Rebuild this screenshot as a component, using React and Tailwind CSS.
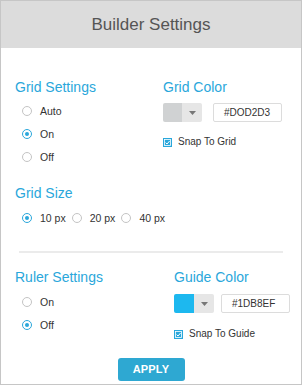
import React from "react";

const font = { fontFamily: '"Liberation Sans", Arial, sans-serif' };

function Radio({ checked, label, className = "" }) {
  return (
    <div className={"flex items-center h-[23px] whitespace-nowrap " + className}>
      {checked ? (
        <span className="w-[10px] h-[10px] shrink-0 rounded-full border border-[#2aa7db] flex items-center justify-center bg-white">
          <span className="w-[4px] h-[4px] rounded-full bg-[#2aa7db]" />
        </span>
      ) : (
        <span className="w-[10px] h-[10px] shrink-0 rounded-full border border-[#c4c4c4] bg-white" />
      )}
      <span className="ml-[8px] text-[10.5px] leading-[14px] text-[#333]">{label}</span>
    </div>
  );
}

function Check({ label, className = "" }) {
  return (
    <div className={"flex items-center h-[12px] whitespace-nowrap " + className}>
      <svg width="9" height="9" viewBox="0 0 9 9">
        <rect x="0" y="0" width="9" height="9" fill="#2aa7db" />
        <rect x="1.5" y="1.5" width="6" height="6" fill="none" stroke="#fff" strokeWidth="0.8" />
        <path d="M2.6 4.6 L4 6 L6.6 3" fill="none" stroke="#fff" strokeWidth="1" />
      </svg>
      <span className="ml-[6px] text-[10px] leading-[14px] text-[#333]">{label}</span>
    </div>
  );
}

function ColorPicker({ color, value, swatchW, inputW, gap, className = "" }) {
  return (
    <div className={"flex items-center " + className}>
      <div className="flex h-[19px] rounded-[2px] overflow-hidden">
        <div className="h-full" style={{ width: swatchW, background: color }} />
        <div className="w-[20px] h-full bg-[#e6e6e6] flex items-center justify-center">
          <svg width="7" height="4" viewBox="0 0 7 4">
            <path d="M0 0 L7 0 L3.5 4 Z" fill="#777" />
          </svg>
        </div>
      </div>
      <div
        className="h-[19px] border border-[#dcdcdc] rounded-[2px] bg-white flex items-center pl-[10px] text-[10px] text-[#333]"
        style={{ width: inputW, marginLeft: gap }}
      >
        {value}
      </div>
    </div>
  );
}

function Title({ children, className = "" }) {
  return (
    <div className={"text-[14px] leading-[18px] text-[#2aa7db] whitespace-nowrap " + className}>{children}</div>
  );
}

export default function App() {
  return (
    <div style={font} className="w-[302px] h-[385px] border border-[#c6c6c6] bg-white flex flex-col box-border">
      <div className="h-[47px] bg-[#dcdcdc] flex items-center justify-center text-[17px] text-[#555] shrink-0">
        Builder Settings
      </div>
      <div className="flex pt-[30px]">
        <div className="w-[162px] pl-[14px]">
          <Title>Grid Settings</Title>
          <div className="mt-[3px] pl-[7px]">
            <Radio label="Auto" />
            <Radio label="On" checked />
            <Radio label="Off" />
          </div>
          <Title className="mt-[16px]">Grid Size</Title>
          <div className="mt-[4px] pl-[7px] flex">
            <Radio label="10 px" checked />
            <Radio label="20 px" className="ml-[6px]" />
            <Radio label="40 px" className="ml-[6px]" />
          </div>
        </div>
        <div>
          <Title>Grid Color</Title>
          <ColorPicker color="#d0d2d3" value="#DOD2D3" swatchW={19} inputW={69} gap={11} className="mt-[7px]" />
          <Check label="Snap To Grid" className="mt-[14px]" />
        </div>
      </div>
      <div className="mx-[18px] mt-[22px] h-[2px] bg-[#ebebeb]" />
      <div className="flex pt-[15px]">
        <div className="w-[173px] pl-[14px]">
          <Title>Ruler Settings</Title>
          <div className="mt-[4px] pl-[7px]">
            <Radio label="On" />
            <Radio label="Off" checked />
          </div>
        </div>
        <div>
          <Title>Guide Color</Title>
          <ColorPicker color="#1db8ef" value="#1DB8EF" swatchW={20} inputW={69} gap={7} className="mt-[8px]" />
          <Check label="Snap To Guide" className="mt-[15px]" />
        </div>
      </div>
      <div className="flex justify-center mt-auto mb-[3px]">
        <button className="w-[67px] h-[23px] rounded-[3px] bg-[#2ea8d2] text-white text-[11px] font-bold tracking-[0.2px]">
          APPLY
        </button>
      </div>
    </div>
  );
}
